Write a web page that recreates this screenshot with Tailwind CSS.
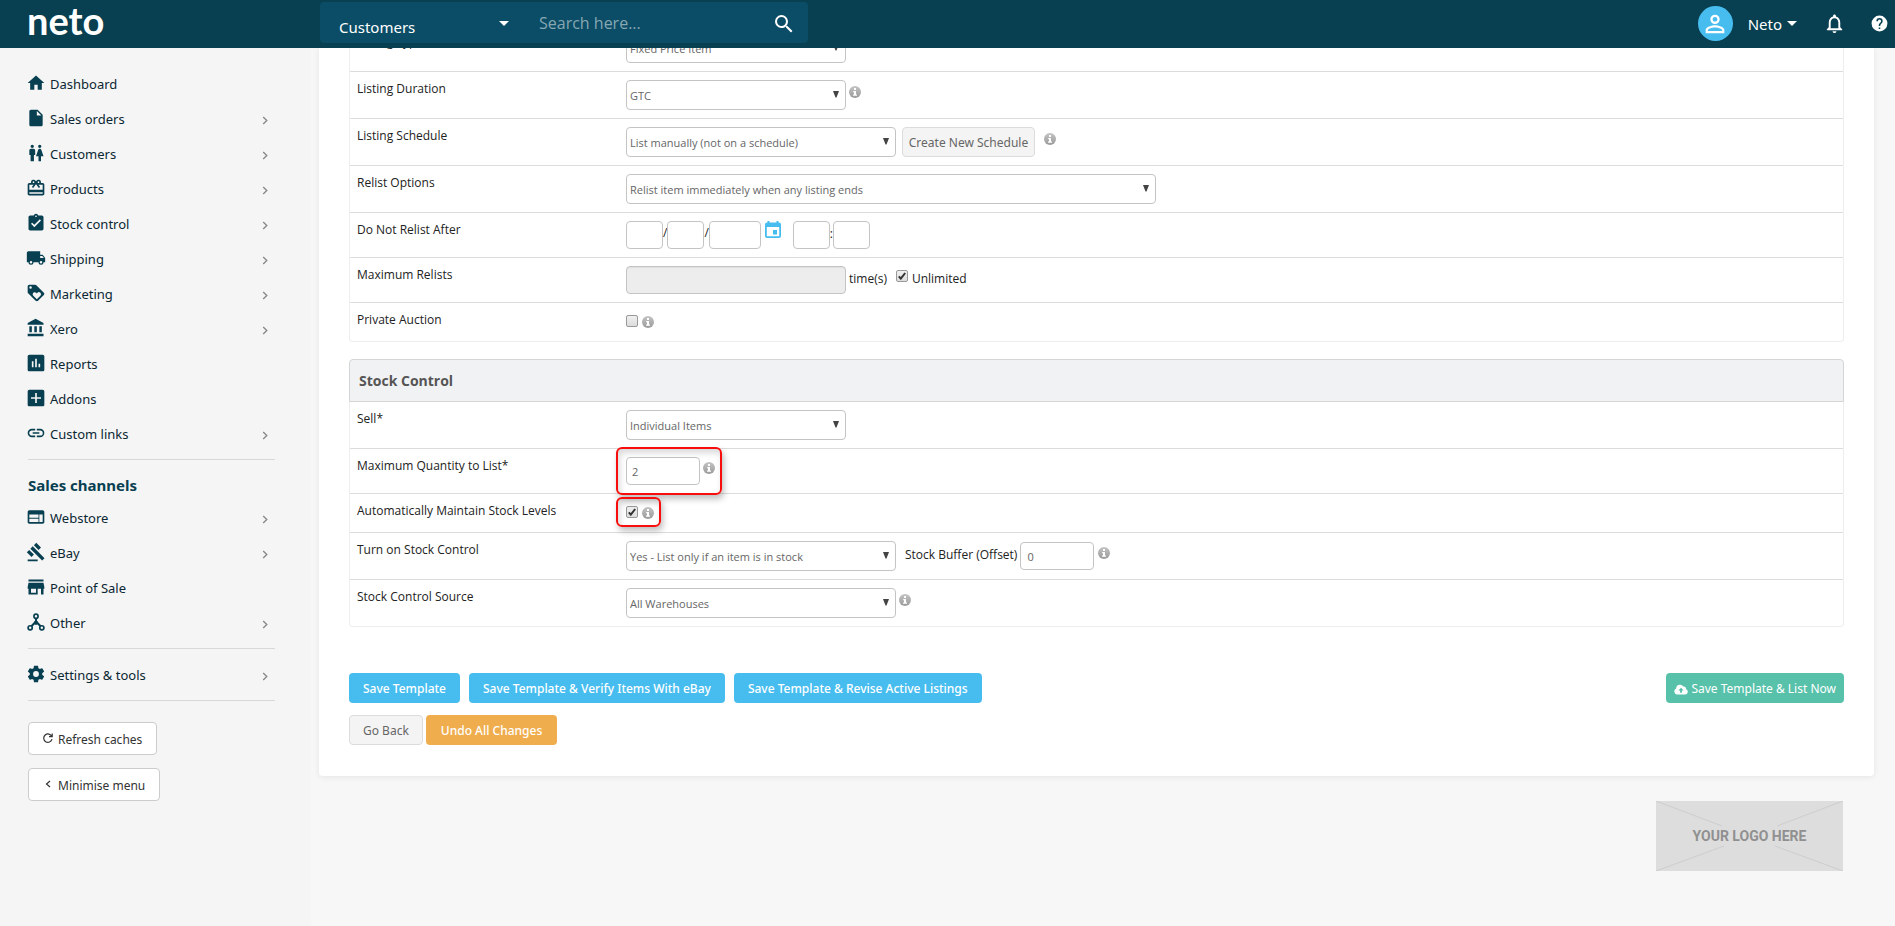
<!DOCTYPE html>
<html lang="en">
<head>
<meta charset="utf-8">
<meta name="viewport" content="width=device-width, initial-scale=1">
<title>Neto - eBay Listing Template</title>
<script src="https://cdn.jsdelivr.net/npm/@tailwindcss/browser@4"></script>
</head>
<body class="min-h-screen bg-[#f7f7f7] font-['Open_Sans','Noto_Sans',sans-serif] text-xs text-[#222]">

<svg class="absolute size-0" aria-hidden="true">
  <defs>
    <linearGradient id="info-grey" x1="0" y1="0" x2="0" y2="1"><stop offset="0" stop-color="#c4c4c4"/><stop offset="1" stop-color="#9a9a9a"/></linearGradient>
    <symbol id="info" viewBox="0 0 12 12"><circle cx="6" cy="6" r="6" fill="url(#info-grey)"/><path d="M5 2h2v2H5zM4.200 5H7v3.500h1V9.700H4V8.500h1V6.200h-.8z" fill="#fff"/></symbol>
    <symbol id="arrow" viewBox="0 0 6 7"><path d="M0 0h6L3.500 6.500h-1z" fill="#444"/></symbol>
    <symbol id="chev" viewBox="0 0 6 10"><path d="M1 1l4 4-4 4" fill="none" stroke="#888" stroke-width="1.500"/></symbol>
  </defs>
</svg>

<header class="relative z-20 flex h-12 items-start bg-[#083f51] font-['Noto_Sans','Open_Sans',sans-serif] text-[15px] text-white">
  <a href="#" aria-label="neto" class="w-80 shrink-0 pl-[27px] font-['Lato',sans-serif] text-[38px] leading-10 font-bold">neto</a>
  <form class="mt-0.5 flex h-[41px] w-[488px] items-center rounded bg-[#0b4d66]">
    <div class="relative w-[219px]">
      <select aria-label="Search in" class="w-full appearance-none bg-transparent pt-2 pl-[19px] outline-none"><option>Customers</option></select>
      <svg class="pointer-events-none absolute top-3 right-[30px] h-[5px] w-2.5" viewBox="0 0 10 5" fill="#fff"><path d="M0 0h10L5 5z"/></svg>
    </div>
    <input type="text" aria-label="Search" placeholder="Search here..." class="min-w-0 flex-1 bg-transparent font-['Open_Sans',sans-serif] text-base outline-none placeholder:text-[#86a7b3]">
    <button type="button" aria-label="Search" class="mt-0.5 mr-3"><svg class="size-6" viewBox="0 0 24 24" fill="#fff"><path d="M15.500 14h-.79l-.28-.27A6.471 6.471 0 0 0 16 9.500 6.500 6.500 0 1 0 9.500 16c1.610 0 3.090-.59 4.230-1.570l.27.28v.79l5 4.990L20.490 19l-4.990-5zm-6 0C7.010 14 5 11.990 5 9.500S7.010 5 9.500 5 14 7.010 14 9.500 11.990 14 9.500 14z"/></svg></button>
  </form>
  <div class="ml-auto flex h-[47px] items-center pr-1.5">
    <span class="flex size-[35px] items-center justify-center rounded-full bg-[#47bdef]"><svg class="size-7" viewBox="0 0 24 24" fill="#fff"><path d="M12 5.900a2.100 2.100 0 1 1 0 4.200 2.100 2.100 0 0 1 0-4.200m0 9c2.970 0 6.100 1.460 6.100 2.100v1.100H5.900V17c0-.64 3.130-2.100 6.100-2.100M12 4a4 4 0 1 0 0 8 4 4 0 0 0 0-8zm0 9c-2.670 0-8 1.340-8 4v3h16v-3c0-2.660-5.330-4-8-4z"/></svg></span>
    <button type="button" class="ml-[15px] flex items-center gap-[5px]">Neto <svg class="h-[5px] w-2.5" viewBox="0 0 10 5" fill="#fff"><path d="M0 0h10L5 5z"/></svg></button>
    <button type="button" aria-label="Notifications" class="ml-[26px]"><svg class="size-[23px]" viewBox="0 0 24 24" fill="#fff"><path d="M12 22c1.100 0 2-.9 2-2h-4c0 1.100.9 2 2 2zm6-6v-5c0-3.070-1.630-5.640-4.500-6.320V4c0-.83-.67-1.500-1.500-1.500s-1.500.67-1.500 1.500v.68C7.640 5.360 6 7.920 6 11v5l-2 2v1h16v-1l-2-2zm-2 1H8v-6c0-2.480 1.510-4.500 4-4.500s4 2.020 4 4.500v6z"/></svg></button>
    <button type="button" aria-label="Help" class="ml-6"><svg class="size-[19px]" viewBox="0 0 24 24" fill="#fff"><path d="M12 2a10 10 0 1 0 0 20 10 10 0 0 0 0-20zm1 17h-2v-2h2v2zm2.070-7.750-.9.920C13.450 12.900 13 13.500 13 15h-2v-.5c0-1.100.45-2.100 1.170-2.830l1.240-1.260c.37-.36.59-.86.59-1.410a2 2 0 0 0-4 0H8a4 4 0 0 1 8 0c0 .88-.36 1.680-.93 2.250z"/></svg></button>
  </div>
</header>

<div class="flex min-h-[calc(100vh-48px)]">
  <aside class="w-[311px] shrink-0 bg-[#f5f5f5] pt-[19px] pr-9 pl-7 font-['Noto_Sans','Open_Sans',sans-serif] text-[13px] text-[#0b2733]">
    <nav class="[&_a]:flex [&_a]:h-[35px] [&_a]:items-center [&_a]:gap-1 [&_a>svg:first-child]:mb-1 [&_a>svg:first-child]:-ml-0.5 [&_a>svg:first-child]:size-5 [&_a>svg:first-child]:fill-[#083f51] [&_a>svg:last-child:not(:first-child)]:mt-0.5 [&_a>svg:last-child:not(:first-child)]:mr-[7px] [&_a>svg:last-child:not(:first-child)]:ml-auto [&_a>svg:last-child:not(:first-child)]:h-[9px] [&_a>svg:last-child:not(:first-child)]:w-[6px]">
      <a href="#"><svg viewBox="0 0 24 24"><path d="M10 20v-6h4v6h5v-8h3L12 3 2 12h3v8z"/></svg>Dashboard</a>
      <a href="#"><svg viewBox="0 0 24 24"><path d="M6 2c-1.100 0-2 .9-2 2v16c0 1.100.9 2 2 2h12c1.100 0 2-.9 2-2V8l-6-6H6zm7 7V3.500L18.500 9H13z"/></svg>Sales orders<svg><use href="#chev"/></svg></a>
      <a href="#"><svg viewBox="0 0 24 24"><path d="M5.500 22v-7.500H4V9c0-1.100.9-2 2-2h3c1.100 0 2 .9 2 2v5.500H9.500V22h-4zM18 22v-6h3l-2.540-7.630A2.010 2.010 0 0 0 16.560 7h-.12a2 2 0 0 0-1.900 1.370L12 16h3v6h3zM7.500 6a2 2 0 1 0 0-4 2 2 0 0 0 0 4zm9 0a2 2 0 1 0 0-4 2 2 0 0 0 0 4z"/></svg>Customers<svg><use href="#chev"/></svg></a>
      <a href="#"><svg viewBox="0 0 24 24"><path d="M20 6h-2.180c.11-.31.18-.65.18-1a3 3 0 0 0-5.500-1.650l-.5.670-.5-.68A3 3 0 0 0 6 5c0 .35.070.69.180 1H4c-1.110 0-1.990.89-1.990 2L2 19c0 1.110.89 2 2 2h16c1.110 0 2-.89 2-2V8c0-1.110-.89-2-2-2zm-5-2a1 1 0 1 1 0 2 1 1 0 0 1 0-2zM9 4a1 1 0 1 1 0 2 1 1 0 0 1 0-2zm11 15H4v-2h16v2zm0-5H4V8h5.080L7 10.830 8.620 12 11 8.760l1-1.360 1 1.360L15.380 12 17 10.830 14.920 8H20v6z"/></svg>Products<svg><use href="#chev"/></svg></a>
      <a href="#"><svg viewBox="0 0 24 24"><path d="M19 3h-4.180a3 3 0 0 0-5.640 0H5c-1.100 0-2 .9-2 2v14c0 1.100.9 2 2 2h14c1.100 0 2-.9 2-2V5c0-1.100-.9-2-2-2zm-7 0a1 1 0 1 1 0 2 1 1 0 0 1 0-2zm-2 14-4-4 1.410-1.410L10 14.170l6.590-6.590L18 9l-8 8z"/></svg>Stock control<svg><use href="#chev"/></svg></a>
      <a href="#"><svg viewBox="0 0 24 24"><path d="M20 8h-3V4H3c-1.100 0-2 .9-2 2v11h2a3 3 0 0 0 6 0h6a3 3 0 0 0 6 0h2v-5l-3-4zM6 18.500a1.500 1.500 0 1 1 0-3 1.500 1.500 0 0 1 0 3zm13.500-9 1.960 2.500H17V9.500h2.500zm-1.500 9a1.500 1.500 0 1 1 0-3 1.500 1.500 0 0 1 0 3z"/></svg>Shipping<svg><use href="#chev"/></svg></a>
      <a href="#"><svg viewBox="0 0 24 24"><path d="m21.410 11.580-9-9C12.050 2.220 11.550 2 11 2H4c-1.100 0-2 .9-2 2v7c0 .55.22 1.050.59 1.420l9 9c.36.36.86.58 1.410.58s1.050-.22 1.410-.59l7-7c.37-.36.59-.86.59-1.410s-.23-1.060-.59-1.420zM5.500 7a1.500 1.500 0 1 1 0-3 1.500 1.500 0 0 1 0 3zm11.770 8.270L13 19.540l-4.270-4.270A2.500 2.500 0 0 1 10.500 11c.69 0 1.320.28 1.770.74l.73.72.73-.73a2.500 2.500 0 0 1 3.540 3.540z"/></svg>Marketing<svg><use href="#chev"/></svg></a>
      <a href="#"><svg viewBox="0 0 24 24"><path d="M4 10v7h3v-7H4zm6 0v7h3v-7h-3zM2 22h19v-3H2v3zm14-12v7h3v-7h-3zm-4.500-9L2 6v2h19V6l-9.500-5z"/></svg>Xero<svg><use href="#chev"/></svg></a>
      <a href="#"><svg viewBox="0 0 24 24"><path d="M20 2H4c-1.100 0-2 .9-2 2v16c0 1.100.9 2 2 2h16c1.100 0 2-.9 2-2V4c0-1.100-.9-2-2-2zM9 17H7v-7h2v7zm4 0h-2V7h2v10zm4 0h-2v-4h2v4z"/></svg>Reports</a>
      <a href="#"><svg viewBox="0 0 24 24"><path d="M20 2H4c-1.100 0-2 .9-2 2v16c0 1.100.9 2 2 2h16c1.100 0 2-.9 2-2V4c0-1.100-.9-2-2-2zm-2 11h-5v5h-2v-5H6v-2h5V6h2v5h5v2z"/></svg>Addons</a>
      <a href="#"><svg viewBox="0 0 24 24"><path d="M3.900 12c0-1.710 1.390-3.100 3.100-3.100h4V7H7a5 5 0 0 0 0 10h4v-1.900H7c-1.710 0-3.100-1.390-3.100-3.100zM8 13h8v-2H8v2zm9-6h-4v1.900h4a3.100 3.100 0 0 1 0 6.200h-4V17h4a5 5 0 0 0 0-10z"/></svg>Custom links<svg><use href="#chev"/></svg></a>
      <hr class="mt-[7px] border-[#d8d8d8]">
      <h2 class="pt-[15px] pb-1.5 text-[15px] leading-5 font-bold text-[#083f51]">Sales channels</h2>
      <a href="#"><svg viewBox="0 0 24 24"><path d="M20 4H4c-1.100 0-1.990.9-1.990 2L2 18c0 1.100.9 2 2 2h16c1.100 0 2-.9 2-2V6c0-1.100-.9-2-2-2zm-5 14H4v-4h11v4zm0-5H4V9h11v4zm5 5h-4V9h4v9z"/></svg>Webstore<svg><use href="#chev"/></svg></a>
      <a href="#"><svg viewBox="0 0 24 24"><path d="M2 21h12v2H2zM5.245 8.070l2.830-2.827 14.140 14.142-2.828 2.828zM12.317 1l5.657 5.656-2.830 2.830-5.654-5.660zM3.825 9.485l5.657 5.657-2.828 2.828-5.657-5.657z"/></svg>eBay<svg><use href="#chev"/></svg></a>
      <a href="#"><svg viewBox="0 0 24 24"><path d="M21 3H3v2.500h18V3zm1 11v-2l-1-5H3l-1 5v2h1v7h11v-7h4v7h3v-7h1zm-10 5H6v-5h6v5z"/></svg>Point of Sale</a>
      <a href="#"><svg viewBox="0 0 24 24"><g fill="none" stroke="#083f51" stroke-width="2"><circle cx="12" cy="5" r="2.500"/><circle cx="5" cy="19" r="2.500"/><circle cx="19" cy="19" r="2.500"/><path d="M12 7.500V12M12 11.500l-5.500 5.500M12 11.500l5.500 5.500" stroke-width="2.500"/></g><circle cx="12" cy="13" r="2.500"/></svg>Other<svg><use href="#chev"/></svg></a>
      <hr class="mt-[7px] mb-[9px] border-[#d8d8d8]">
      <a href="#"><svg viewBox="0 0 24 24"><path d="M19.430 12.980c.04-.32.070-.64.070-.98s-.03-.66-.07-.98l2.110-1.650c.19-.15.24-.42.12-.64l-2-3.460c-.12-.22-.39-.3-.61-.22l-2.490 1c-.52-.4-1.080-.73-1.690-.98l-.38-2.650A.488.488 0 0 0 14 2h-4c-.25 0-.46.18-.49.42l-.38 2.650c-.61.25-1.170.59-1.690.98l-2.490-1c-.23-.09-.49 0-.61.22l-2 3.460c-.13.22-.07.49.12.64l2.110 1.650c-.04.32-.07.65-.07.98s.03.66.07.98l-2.110 1.650c-.19.15-.24.42-.12.64l2 3.460c.12.22.39.3.61.22l2.490-1c.52.4 1.080.73 1.690.98l.38 2.650c.03.24.24.42.49.42h4c.25 0 .46-.18.49-.42l.38-2.650c.61-.25 1.170-.59 1.690-.98l2.490 1c.23.09.49 0 .61-.22l2-3.460c.12-.22.07-.49-.12-.64l-2.110-1.650zM12 15.500a3.500 3.500 0 1 1 0-7 3.500 3.500 0 0 1 0 7z"/></svg>Settings &amp; tools<svg><use href="#chev"/></svg></a>
      <hr class="mt-[7px] border-[#d8d8d8]">
    </nav>
    <div class="mt-[21px] flex flex-col items-start gap-[13px] text-xs text-[#333]">
      <button type="button" class="flex h-[33px] items-center gap-[5px] rounded border border-[#ccc] bg-white px-3.5 pt-0.5"><svg class="mb-1 size-2.5" viewBox="0 0 10 10" fill="none" stroke="#333" stroke-width="1.200"><path d="M8.800 3.500A4.200 4.200 0 1 0 9 6.200M9.200 .5v3.200H6"/></svg>Refresh caches</button>
      <button type="button" class="flex h-[33px] items-center gap-[5px] rounded border border-[#ccc] bg-white px-3.5 pt-0.5"><svg class="mb-1 size-2.5" viewBox="0 0 10 10" fill="none" stroke="#333" stroke-width="1.200"><path d="M7 2L3.500 5 7 8"/></svg>Minimise menu</button>
    </div>
  </aside>

  <main class="min-w-0 flex-1 pr-[21px] pl-2">
    <form class="overflow-hidden rounded-b bg-white px-[30px] pb-[31px] shadow-[0_1px_6px_rgba(0,0,0,0.08)]">

      <section aria-label="Listing details" class="-mt-6 rounded border border-t-0 border-[#eee] leading-[18px]">
        <div class="grid grid-cols-[268px_1fr] border-t border-[#dcdcdc] py-2">
          <label for="type" class="px-[7px]">Listing Type</label>
          <div class="flex items-start px-2">
            <div class="relative w-[220px]"><select id="type" class="h-[30px] w-full appearance-none rounded border border-[#c4c4c4] bg-white pt-0.5 pl-[3px] text-[11px] text-[#666]"><option>Fixed Price Item</option></select><svg class="pointer-events-none absolute top-[11px] right-[7px] h-[7px] w-1.5"><use href="#arrow"/></svg></div>
          </div>
        </div>
        <div class="grid grid-cols-[268px_1fr] border-t border-[#dcdcdc] py-2">
          <label for="duration" class="px-[7px]">Listing Duration</label>
          <div class="flex items-start px-2">
            <div class="relative w-[220px]"><select id="duration" class="h-[30px] w-full appearance-none rounded border border-[#c4c4c4] bg-white pt-0.5 pl-[3px] text-[11px] text-[#666]"><option>GTC</option></select><svg class="pointer-events-none absolute top-[11px] right-[7px] h-[7px] w-1.5"><use href="#arrow"/></svg></div>
            <svg class="mt-1.5 ml-[3px] size-3"><use href="#info"/></svg>
          </div>
        </div>
        <div class="grid grid-cols-[268px_1fr] border-t border-[#dcdcdc] py-2">
          <label for="schedule" class="px-[7px]">Listing Schedule</label>
          <div class="flex items-start px-2">
            <div class="relative w-[270px]"><select id="schedule" class="h-[30px] w-full appearance-none rounded border border-[#c4c4c4] bg-white pt-0.5 pl-[3px] text-[11px] text-[#666]"><option>List manually (not on a schedule)</option></select><svg class="pointer-events-none absolute top-[11px] right-[7px] h-[7px] w-1.5"><use href="#arrow"/></svg></div>
            <button type="button" class="ml-1.5 h-[30px] w-[133px] rounded border border-[#dcdcdc] bg-[#f4f4f4] pt-0.5 font-['Noto_Sans','Open_Sans',sans-serif] whitespace-nowrap text-[#666]">Create New Schedule</button>
            <svg class="mt-1.5 ml-[9px] size-3"><use href="#info"/></svg>
          </div>
        </div>
        <div class="grid grid-cols-[268px_1fr] border-t border-[#dcdcdc] py-2">
          <label for="relist" class="px-[7px]">Relist Options</label>
          <div class="flex items-start px-2">
            <div class="relative w-[530px]"><select id="relist" class="h-[30px] w-full appearance-none rounded border border-[#c4c4c4] bg-white pt-0.5 pl-[3px] text-[11px] text-[#666]"><option>Relist item immediately when any listing ends</option></select><svg class="pointer-events-none absolute top-[11px] right-[7px] h-[7px] w-1.5"><use href="#arrow"/></svg></div>
          </div>
        </div>
        <div class="grid grid-cols-[268px_1fr] border-t border-[#dcdcdc] py-2">
          <label for="day" class="px-[7px]">Do Not Relist After</label>
          <div class="flex items-start px-2">
            <input id="day" type="text" aria-label="Day" class="h-7 w-[37px] rounded border border-[#c4c4c4] bg-white"><span class="mt-[3px]">/</span><input type="text" aria-label="Month" class="h-7 w-[37px] rounded border border-[#c4c4c4] bg-white"><span class="mt-[3px]">/</span><input type="text" aria-label="Year" class="h-7 w-[52px] rounded border border-[#c4c4c4] bg-white">
            <button type="button" aria-label="Pick date" class="ml-1"><svg class="h-[17px] w-4" viewBox="0 0 16 17"><path d="M2 1.500h12a2 2 0 0 1 2 2V15a2 2 0 0 1-2 2H2a2 2 0 0 1-2-2V3.500a2 2 0 0 1 2-2zM1.800 6v9.200h12.400V6z" fill="#47bdef" fill-rule="evenodd"/><path d="M2.500 0h2v2h-2zM11.500 0h2v2h-2zM8 9h4v4.500H8z" fill="#47bdef"/></svg></button>
            <input type="text" aria-label="Hour" class="ml-3 h-7 w-[37px] rounded border border-[#c4c4c4] bg-white"><span class="mt-1">:</span><input type="text" aria-label="Minute" class="h-7 w-[37px] rounded border border-[#c4c4c4] bg-white">
          </div>
        </div>
        <div class="grid grid-cols-[268px_1fr] border-t border-[#dcdcdc] py-2">
          <label for="maxrelist" class="px-[7px]">Maximum Relists</label>
          <div class="flex items-start px-2">
            <input id="maxrelist" type="text" disabled class="h-7 w-[220px] rounded border border-[#c4c4c4] bg-[#ededed] shadow-[inset_0_1px_1px_rgba(0,0,0,0.06)]">
            <span class="mt-1 ml-[3px]">time(s)</span>
            <label class="relative mt-1 ml-[9px] flex items-start gap-1"><input type="checkbox" checked class="peer size-3 appearance-none rounded-xs border border-[#999] bg-linear-to-b from-[#f0f0f0] to-[#ddd]"><svg class="pointer-events-none absolute top-0.5 left-0.5 hidden size-2 peer-checked:block" viewBox="0 0 8 8"><path d="M.8 4.300l2 2.300L7.200 1" fill="none" stroke="#333" stroke-width="2"/></svg>Unlimited</label>
          </div>
        </div>
        <div class="grid grid-cols-[268px_1fr] border-t border-[#dcdcdc] py-2">
          <label for="private" class="px-[7px]">Private Auction</label>
          <div class="flex h-[22px] items-start gap-1 px-2">
            <input id="private" type="checkbox" class="mt-1 size-3 appearance-none rounded-xs border border-[#999] bg-linear-to-b from-[#f0f0f0] to-[#ddd]">
            <svg class="mt-[5px] size-3"><use href="#info"/></svg>
          </div>
        </div>
      </section>

      <h3 class="mt-[17px] flex h-[43px] items-center rounded-t border border-[#d5d5d5] bg-[#f1f2f4] px-[9px] text-sm font-bold text-[#555]">Stock Control</h3>
      <section aria-label="Stock Control" class="rounded-b border border-t-0 border-[#eee] leading-[18px]">
        <div class="grid grid-cols-[268px_1fr] py-2">
          <label for="sell" class="px-[7px]">Sell*</label>
          <div class="flex items-start px-2">
            <div class="relative w-[220px]"><select id="sell" class="h-[30px] w-full appearance-none rounded border border-[#c4c4c4] bg-white pt-0.5 pl-[3px] text-[11px] text-[#666]"><option>Individual Items</option></select><svg class="pointer-events-none absolute top-[11px] right-[7px] h-[7px] w-1.5"><use href="#arrow"/></svg></div>
          </div>
        </div>
        <div class="grid grid-cols-[268px_1fr] border-t border-[#dcdcdc] py-2">
          <label for="maxqty" class="px-[7px]">Maximum Quantity to List*</label>
          <div class="px-2">
            <div class="relative flex w-fit items-start gap-[3px]">
              <input id="maxqty" type="text" value="2" class="h-7 w-[74px] rounded border border-[#c4c4c4] bg-white px-[5px] text-[11px] text-[#666]">
              <svg class="mt-[5px] size-3"><use href="#info"/></svg>
              <span class="pointer-events-none absolute -top-2.5 -right-[7px] -bottom-2.5 -left-2.5 z-10 rounded-md border-2 border-[#f80d0d] shadow-[2px_4px_6px_rgba(0,0,0,0.25),inset_2px_4px_6px_rgba(0,0,0,0.15)]"></span>
            </div>
          </div>
        </div>
        <div class="grid grid-cols-[268px_1fr] border-t border-[#dcdcdc] py-2">
          <label for="maintain" class="px-[7px]">Automatically Maintain Stock Levels</label>
          <div class="px-2">
            <div class="relative flex h-[22px] w-fit items-start gap-1">
              <input id="maintain" type="checkbox" checked class="peer mt-1 size-3 appearance-none rounded-xs border border-[#999] bg-linear-to-b from-[#f0f0f0] to-[#ddd]"><svg class="pointer-events-none absolute top-1.5 left-0.5 hidden size-2 peer-checked:block" viewBox="0 0 8 8"><path d="M.8 4.300l2 2.300L7.200 1" fill="none" stroke="#333" stroke-width="2"/></svg>
              <svg class="mt-[5px] size-3"><use href="#info"/></svg>
              <span class="pointer-events-none absolute -top-[5px] -right-[7px] -bottom-[3px] -left-2.5 z-10 rounded-md border-2 border-[#f80d0d] shadow-[2px_4px_6px_rgba(0,0,0,0.25),inset_2px_4px_6px_rgba(0,0,0,0.15)]"></span>
            </div>
          </div>
        </div>
        <div class="grid grid-cols-[268px_1fr] border-t border-[#dcdcdc] py-2">
          <label for="control" class="px-[7px]">Turn on Stock Control</label>
          <div class="flex items-start px-2">
            <div class="relative w-[270px]"><select id="control" class="h-[30px] w-full appearance-none rounded border border-[#c4c4c4] bg-white pt-0.5 pl-[3px] text-[11px] text-[#666]"><option>Yes - List only if an item is in stock</option></select><svg class="pointer-events-none absolute top-[11px] right-[7px] h-[7px] w-1.5"><use href="#arrow"/></svg></div>
            <label for="buffer" class="mt-[5px] ml-[9px]">Stock Buffer (Offset)</label>
            <input id="buffer" type="text" value="0" class="mt-px ml-[3px] h-7 w-[74px] rounded border border-[#c4c4c4] bg-white px-1.5 text-[11px] text-[#666]">
            <svg class="mt-1.5 ml-1 size-3"><use href="#info"/></svg>
          </div>
        </div>
        <div class="grid grid-cols-[268px_1fr] border-t border-[#dcdcdc] py-2">
          <label for="source" class="px-[7px]">Stock Control Source</label>
          <div class="flex items-start px-2">
            <div class="relative w-[270px]"><select id="source" class="h-[30px] w-full appearance-none rounded border border-[#c4c4c4] bg-white pt-0.5 pl-[3px] text-[11px] text-[#666]"><option>All Warehouses</option></select><svg class="pointer-events-none absolute top-[11px] right-[7px] h-[7px] w-1.5"><use href="#arrow"/></svg></div>
            <svg class="mt-1.5 ml-[3px] size-3"><use href="#info"/></svg>
          </div>
        </div>
      </section>

      <div class="mt-[46px] flex gap-[9px] font-['Noto_Sans','Open_Sans',sans-serif] text-white">
        <button type="button" class="h-[30px] rounded bg-[#47bdef] px-3.5 pt-0.5 font-medium">Save Template</button>
        <button type="button" class="h-[30px] rounded bg-[#47bdef] px-3.5 pt-0.5 font-medium">Save Template &amp; Verify Items With eBay</button>
        <button type="button" class="h-[30px] rounded bg-[#47bdef] px-3.5 pt-0.5 font-medium">Save Template &amp; Revise Active Listings</button>
        <button type="button" class="ml-auto flex h-[30px] items-center gap-[3px] rounded bg-[#57c1aa] px-2 pt-0.5"><svg class="h-[11px] w-3.5" viewBox="0 0 14 11"><path d="M3.300 10.500A3.200 3.200 0 0 1 2.200 4.400 3.800 3.800 0 0 1 9.300 2.600a2.300 2.300 0 0 1 2.800 2.700 2.700 2.700 0 0 1-1 5.200z" fill="#fff"/><path d="M7 3.800l2.600 2.800H7.900v2.200H6.100V6.600H4.400z" fill="#57c1aa"/></svg>Save Template &amp; List Now</button>
      </div>
      <div class="mt-3 flex gap-[3px] font-['Noto_Sans','Open_Sans',sans-serif]">
        <button type="button" class="h-[30px] rounded border border-[#dcdcdc] bg-[#f4f4f4] px-[13px] pt-0.5 text-[#666]">Go Back</button>
        <button type="button" class="h-[30px] rounded bg-[#f0ad4e] px-[15px] pt-0.5 font-medium text-white">Undo All Changes</button>
      </div>
    </form>

    <footer class="mt-[25px] flex justify-end pr-[31px]">
      <div class="relative flex h-[70px] w-[187px] items-center justify-center bg-[#ddd] font-['Roboto',sans-serif] text-sm font-bold text-[#909090]">
        <svg class="absolute inset-0 size-full" viewBox="0 0 187 70" stroke="#cdcdcd" fill="none"><path d="M0 0l66 25M187 0l-66 25M0 70l68-25M187 70l-68-25"/></svg>
        <span class="relative">YOUR LOGO HERE</span>
      </div>
    </footer>
  </main>
</div>
</body>
</html>
